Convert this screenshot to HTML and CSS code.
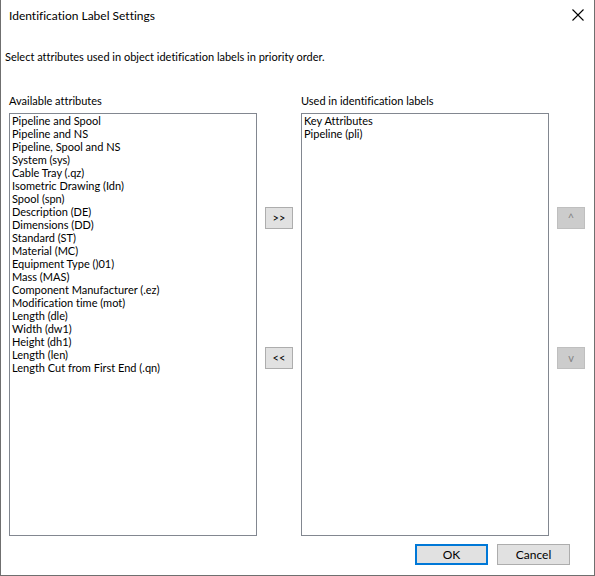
FILE: index.html
```html
<!DOCTYPE html>
<html>
<head>
<meta charset="utf-8">
<link rel="stylesheet" href="styles.css">
</head>
<body>
<div class="window">
  <div class="titlebar">
    <span class="title">Identification Label Settings</span>
    <span class="close"><svg width="12" height="12" viewBox="0 0 12 12"><path d="M0.5 0.5 L11.5 11.5 M11.5 0.5 L0.5 11.5" stroke="#000" stroke-width="1.1" fill="none"/></svg></span>
  </div>
  <div class="intro">Select attributes used in object idetification labels in priority order.</div>
  <div class="main">
    <div class="col">
      <div class="label">Available attributes</div>
      <div class="listbox">
        <div>Pipeline and Spool</div>
        <div>Pipeline and NS</div>
        <div>Pipeline, Spool and NS</div>
        <div>System (sys)</div>
        <div>Cable Tray (.qz)</div>
        <div>Isometric Drawing (Idn)</div>
        <div>Spool (spn)</div>
        <div>Description (DE)</div>
        <div>Dimensions (DD)</div>
        <div>Standard (ST)</div>
        <div>Material (MC)</div>
        <div>Equipment Type ()01)</div>
        <div>Mass (MAS)</div>
        <div>Component Manufacturer (.ez)</div>
        <div>Modification time (mot)</div>
        <div>Length (dle)</div>
        <div>Width (dw1)</div>
        <div>Height (dh1)</div>
        <div>Length (len)</div>
        <div>Length Cut from First End (.qn)</div>
      </div>
    </div>
    <div class="btncol">
      <button class="btn small">&gt;&gt;</button>
      <button class="btn small">&lt;&lt;</button>
    </div>
    <div class="col">
      <div class="label">Used in identification labels</div>
      <div class="listbox">
        <div>Key Attributes</div>
        <div>Pipeline (pli)</div>
      </div>
    </div>
    <div class="btncol">
      <button class="btn small disabled">^</button>
      <button class="btn small disabled">v</button>
    </div>
  </div>
  <div class="footer">
    <button class="btn wide default">OK</button>
    <button class="btn wide">Cancel</button>
  </div>
</div>
</body>
</html>
```
FILE: styles.css
```css
html, body {
  margin: 0;
  padding: 0;
  background: #ffffff;
}
body {
  font-family: Lato, "Noto Sans", sans-serif;
  font-size: 11px;
  color: #000;
  font-variant-ligatures: none;
}
.window {
  width: 595px;
  height: 576px;
  box-sizing: border-box;
  border: 1px solid #6f6f6f;
  border-top: none;
  background: #fff;
  display: flex;
  flex-direction: column;
}
.titlebar {
  height: 31px;
  display: flex;
  align-items: center;
  justify-content: space-between;
  padding: 0 10px 0 8px;
}
.title {
  font-size: 12px;
  line-height: 16px;
}
.close {
  display: flex;
  width: 12px;
  height: 12px;
  margin-top: -2px;
}
.intro {
  margin-top: 18px;
  padding-left: 4px;
  line-height: 16px;
}
.main {
  margin-top: 28px;
  padding-left: 8px;
  display: flex;
  gap: 8px;
}
.col {
  display: flex;
  flex-direction: column;
  width: 248px;
}
.label {
  line-height: 16px;
  height: 16px;
}
.listbox {
  margin-top: 4px;
  height: 423px;
  box-sizing: border-box;
  border: 1px solid #828790;
  padding: 0 0 0 2px;
  line-height: 13px;
}
.btncol {
  width: 28px;
  display: flex;
  flex-direction: column;
  padding-top: 114px;
  gap: 118px;
}
.btn {
  font-family: inherit;
  font-size: 11px;
  font-variant-ligatures: none;
  color: #000;
  background: #e1e1e1;
  border: 1px solid #adadad;
  margin: 0;
  padding: 0;
  box-sizing: border-box;
}
.btn.small {
  width: 28px;
  height: 22px;
  line-height: 18px;
}
.btn.disabled {
  background: #cccccc;
  border-color: #bfbfbf;
  color: #838383;
}
.footer {
  margin-top: 8px;
  padding-left: 414px;
  display: flex;
  gap: 9px;
}
.btn.wide {
  width: 73px;
  height: 21px;
  font-size: 12px;
}
.btn.default {
  border: 2px solid #0078d7;
}
```
